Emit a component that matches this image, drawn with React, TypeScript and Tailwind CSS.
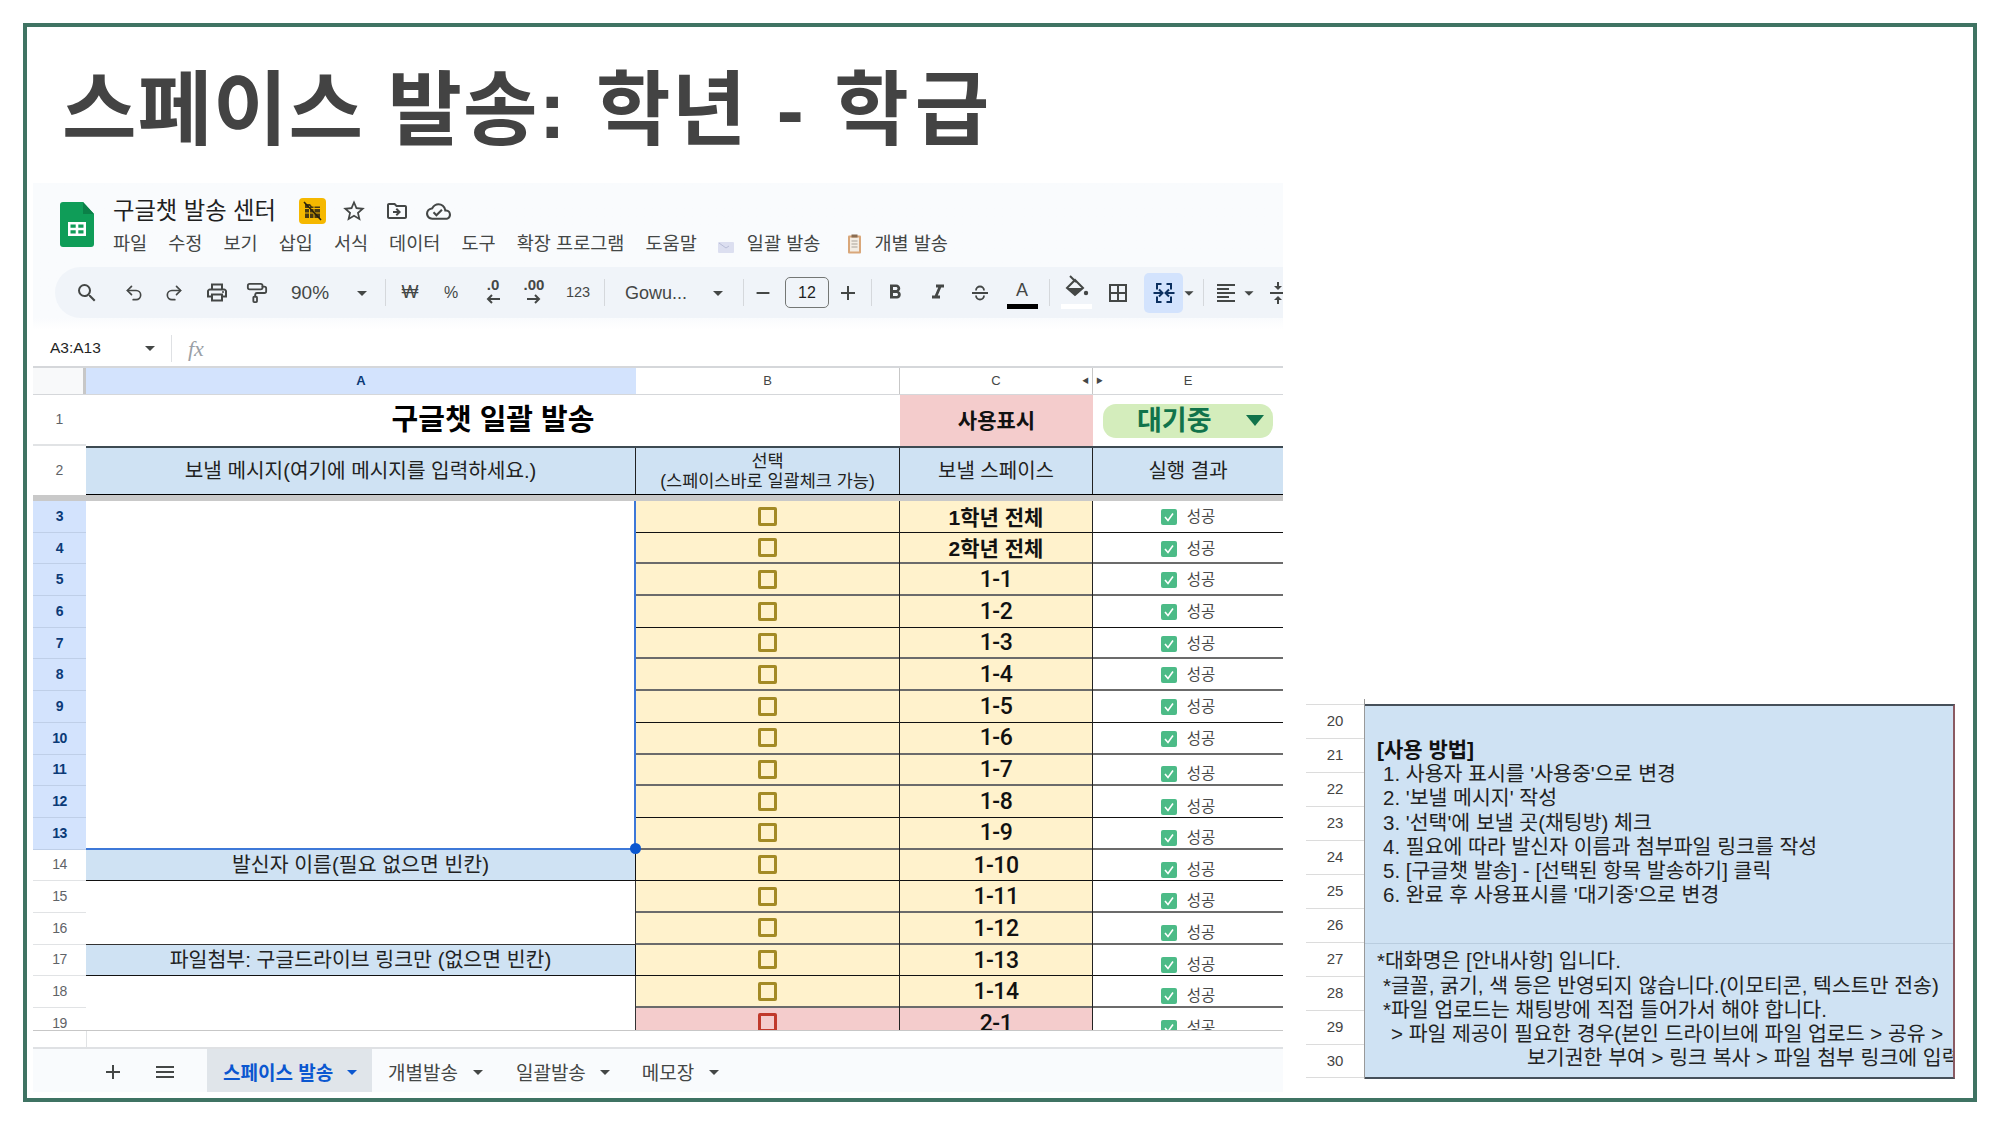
import React from 'react';
import { PaintRoller, Redo2, Undo2 } from 'lucide-react';
import {
    MdAdd, MdArrowDropDown, MdBorderAll, MdFormatAlignLeft, MdFormatBold, MdFormatItalic, MdMenu,
    MdOutlineCloudDone, MdOutlineDriveFileMove, MdOutlinePrint, MdRemove, MdSearch, MdStarBorder, MdVerticalAlignCenter,
} from 'react-icons/md';

const ROWS = [3, 4, 5, 6, 7, 8, 9, 10, 11, 12, 13, 14, 15, 16, 17, 18, 19];
const NAMES = ['1학년 전체', '2학년 전체', '1-1', '1-2', '1-3', '1-4', '1-5', '1-6', '1-7', '1-8', '1-9', '1-10', '1-11', '1-12', '1-13', '1-14', '2-1'];
const DARK_LINES = [3, 6, 9, 12, 14, 17];

const rowLine = (row: number) => (DARK_LINES.includes(row) ? 'border-b border-[#111]' : 'border-b-2 border-[#6b6b6b]');

const SheetsLogo = () => (
    <svg width="34" height="45" viewBox="0 0 34 45">
        <path d="M3 0h20l11 12v30a3 3 0 0 1-3 3H3a3 3 0 0 1-3-3V3a3 3 0 0 1 3-3z" fill="#0f9d58" />
        <path d="M23 0l11 12H23z" fill="#0b8048" />
        <path d="M8 20h18v14H8zM10.5 22.5v3.2h5.2v-3.2zM18.3 22.5v3.2h5.2v-3.2zM10.5 28.3v3.2h5.2v-3.2zM18.3 28.3v3.2h5.2v-3.2z" fill="#fff" fillRule="evenodd" />
    </svg>
);

const LockedBadge = () => (
    <svg width="27" height="26" viewBox="0 0 27 26">
        <rect width="27" height="26" rx="4" fill="#f5b800" />
        <path d="M6 6h5l2 2.5h8V20H6z" fill="#4a3a12" />
        <path d="M6 10.5h15M6 15h15M10.5 8v12M15 8v12" stroke="#f5b800" strokeWidth="1" />
        <path d="M5 4l17 18" stroke="#2b2208" strokeWidth="1.6" />
    </svg>
);

const MergeIcon = () => (
    <svg width="24" height="24" viewBox="0 0 24 24" fill="none" stroke="#0b2f5f" strokeWidth="2">
        <path d="M9.5 3H5v5.5M5 15.5V21h4.5M14.5 3H19v5.5M19 15.5V21h-4.5" />
        <path d="M1.5 12h8.5M7 8.5l3.5 3.5L7 15.5M22.5 12H14M17 8.5L13.5 12l3.5 3.5" />
    </svg>
);

const StrikeIcon = () => (
    <svg width="24" height="24" viewBox="0 0 24 24" fill="none" stroke="#444746" strokeWidth="1.8">
        <path d="M4 12h16M8 9.5a4 4 0 0 1 8 0M8 14.5a4 4 0 0 0 8 0" />
    </svg>
);

const FillIcon = () => (
    <svg width="26" height="24" viewBox="0 0 26 24" fill="none">
        <path d="M7 1l6 6" stroke="#444746" strokeWidth="2" />
        <path d="M4 13l8-8 8 8-8 7z" stroke="#444746" strokeWidth="2" />
        <path d="M4 13h16l-8 7z" fill="#444746" />
        <circle cx="23" cy="18" r="2.2" fill="#444746" />
    </svg>
);

const ArrowIcon = ({ flip = false }: { flip?: boolean }) => (
    <svg width="14" height="10" viewBox="0 0 14 10" fill="none" stroke="#444746" strokeWidth="2" className={flip ? '-scale-x-100' : ''}>
        <path d="M14 5H2M6 1L2 5l4 4" />
    </svg>
);

const MailIcon = () => (
    <svg width="16" height="14" viewBox="0 0 16 14">
        <rect y="2" width="16" height="11" rx="1" fill="#dcdff0" />
        <path d="M1 3l7 5 3-2" stroke="#b9bed8" fill="none" />
    </svg>
);

const ClipboardIcon = () => (
    <svg width="15" height="20" viewBox="0 0 15 20">
        <rect x="1" y="1.5" width="13" height="18" rx="1" fill="#d9a77a" />
        <rect x="3" y="3.5" width="9" height="14" fill="#f3ede4" />
        <path d="M4.5 7h6M4.5 10h6M4.5 13h6" stroke="#a9a39a" />
        <rect x="4.5" y="0.5" width="6" height="3" fill="#8a6d52" />
    </svg>
);

const Sep = ({ className }: { className: string }) => <div className={`w-px h-[27px] bg-[#d5d8dc] shrink-0 ${className}`} />;

const Drop = ({ className = '' }: { className?: string }) => (
    <div className={`w-4 flex items-center justify-center shrink-0 text-[#444746] ${className}`}>
        <MdArrowDropDown size={24} className="shrink-0" />
    </div>
);

const Tool = ({ className = '', children }: { className?: string; children: React.ReactNode }) => (
    <div className={`w-6 h-6 flex items-center justify-center shrink-0 text-[#444746] ${className}`}>{children}</div>
);

const Toolbar = () => (
    <div className="ml-[22px] h-[51px] rounded-l-[26px] bg-[#f0f4f9] flex items-center pl-[20px] overflow-hidden">
        <Tool><MdSearch size={26} /></Tool>
        <Tool className="ml-[23px]"><Undo2 size={20} strokeWidth={2} /></Tool>
        <Tool className="ml-[16px]"><Redo2 size={20} strokeWidth={2} /></Tool>
        <Tool className="ml-[19px]"><MdOutlinePrint size={25} /></Tool>
        <Tool className="ml-[16px]"><PaintRoller size={22} strokeWidth={2} /></Tool>
        <span className="ml-[22px] w-[38px] text-[19px] leading-6 text-[#444746] shrink-0">90%</span>
        <Drop className="ml-[25px]" />
        <Sep className="ml-[15px]" />
        <Tool className="ml-[12px] text-[18px]">₩</Tool>
        <Tool className="ml-[17px] text-[16px]">%</Tool>
        <div className="ml-[18px] w-6 h-[34px] flex flex-col items-center shrink-0 text-[#444746]">
            <span className="text-[15px] leading-[18px] font-bold">.0</span>
            <ArrowIcon />
        </div>
        <div className="ml-[17px] w-6 h-[34px] flex flex-col items-center shrink-0 text-[#444746]">
            <span className="text-[15px] leading-[18px] font-bold">.00</span>
            <ArrowIcon flip />
        </div>
        <Tool className="ml-[20px] text-[14.5px]">123</Tool>
        <Sep className="ml-[14px]" />
        <span className="ml-[20px] w-[63px] text-[18px] leading-6 text-[#444746] shrink-0">Gowu...</span>
        <Drop className="ml-[22px]" />
        <Sep className="ml-[17px]" />
        <div className="ml-[9px] w-5 flex justify-center shrink-0 text-[#444746]"><MdRemove size={22} className="shrink-0" /></div>
        <div className="ml-[12px] w-[44px] h-[31px] rounded-[5px] border border-[#747775] flex items-center justify-center text-[16px] text-[#1f1f1f] shrink-0">12</div>
        <div className="ml-[9px] w-5 flex justify-center shrink-0 text-[#444746]"><MdAdd size={24} className="shrink-0" /></div>
        <Sep className="ml-[13px]" />
        <Tool className="ml-[11px]"><MdFormatBold size={27} /></Tool>
        <Tool className="ml-[19px]"><MdFormatItalic size={27} /></Tool>
        <Tool className="ml-[18px]"><StrikeIcon /></Tool>
        <div className="ml-[18px] w-6 h-[34px] flex flex-col items-center shrink-0">
            <span className="text-[18px] leading-[24px] text-[#444746] mt-[2px]">A</span>
            <div className="w-[31px] h-[5px] bg-black shrink-0 mt-[2px]" />
        </div>
        <Sep className="ml-[15px]" />
        <div className="ml-[14px] w-6 h-[36px] flex flex-col items-center shrink-0">
            <FillIcon />
            <div className="w-[31px] h-[5px] bg-white shrink-0 mt-[5px]" />
        </div>
        <Tool className="ml-[18px]"><MdBorderAll size={24} /></Tool>
        <div className="ml-[14px] w-[39px] h-[40px] rounded-[5px] bg-[#d3e3fd] flex items-center justify-center shrink-0"><MergeIcon /></div>
        <div className="w-3 flex justify-center shrink-0 text-[#444746]"><MdArrowDropDown size={22} className="shrink-0" /></div>
        <Sep className="ml-[8px]" />
        <Tool className="ml-[10px]"><MdFormatAlignLeft size={26} /></Tool>
        <div className="ml-[5px] w-3 flex justify-center shrink-0 text-[#444746]"><MdArrowDropDown size={22} className="shrink-0" /></div>
        <Tool className="ml-[11px]"><MdVerticalAlignCenter size={24} /></Tool>
    </div>
);

const Chrome = () => (
    <div className="h-[147px] bg-gradient-to-b from-[#f9fbfd] from-[135px] to-white shrink-0">
        <div className="h-[84px] flex pl-[27px]">
            <div className="pt-[19px] shrink-0"><SheetsLogo /></div>
            <div className="ml-[19px] min-w-0">
                <div className="h-[42px] pt-[14px] flex items-center">
                    <span className="text-[23.3px] leading-[30px] text-[#1f1f1f]">구글챗 발송 센터</span>
                    <span className="ml-[23px]"><LockedBadge /></span>
                    <MdStarBorder size={26} className="ml-[15px] text-[#444746]" />
                    <MdOutlineDriveFileMove size={24} className="ml-[18px] text-[#444746]" />
                    <MdOutlineCloudDone size={25} className="ml-[17px] text-[#444746]" />
                </div>
                <div className="flex items-center h-[30px] mt-[4px] text-[18.6px] leading-[26px] text-[#444746] whitespace-nowrap">
                    <span>파일</span>
                    <span className="ml-[21px]">수정</span>
                    <span className="ml-[21px]">보기</span>
                    <span className="ml-[21px]">삽입</span>
                    <span className="ml-[21px]">서식</span>
                    <span className="ml-[21px]">데이터</span>
                    <span className="ml-[21px]">도구</span>
                    <span className="ml-[21px]">확장 프로그램</span>
                    <span className="ml-[21px]">도움말</span>
                    <span className="ml-[21px] pt-[5px]"><MailIcon /></span>
                    <span className="ml-[13px]">일괄 발송</span>
                    <span className="ml-[27px]"><ClipboardIcon /></span>
                    <span className="ml-[12px]">개별 발송</span>
                </div>
            </div>
        </div>
        <Toolbar />
    </div>
);

const FormulaBar = () => (
    <div className="h-[36px] flex items-center pl-[17px] bg-white">
        <span className="w-[50px] text-[15.5px] leading-5 text-[#1f1f1f] whitespace-nowrap">A3:A13</span>
        <MdArrowDropDown size={24} className="ml-[38px] text-[#444746]" />
        <div className="ml-[9px] w-px h-[27px] bg-[#dfe1e4]" />
        <span className="ml-[16px] text-[22px] italic text-[#9aa0a6] font-['Liberation_Serif',serif]">fx</span>
    </div>
);

const ColumnHeaders = () => (
    <div className="h-[29px] flex border-t-2 border-b border-[#d5d7da] text-[13px] leading-[26px] text-center text-[#444746]">
        <div className="w-[53px] bg-[#f8f9fa] border-r-[3px] border-[#c7c7c7]" />
        <div className="w-[550px] bg-[#d3e3fd] font-bold text-[#0b3a77]">A</div>
        <div className="w-[264px] border-r border-[#c7c7c7]">B</div>
        <div className="relative w-[193px] border-r border-[#c7c7c7]">
            C
            <span className="absolute right-[3px] top-0 text-[7px]">◀</span>
        </div>
        <div className="relative flex-1">
            E
            <span className="absolute left-[3px] top-0 text-[7px]">▶</span>
        </div>
    </div>
);

const TitleRows = () => (
    <>
        <div className="h-[51px] flex">
            <div className="w-[53px] flex items-center justify-center text-[14px] text-[#5f6368] border-b-2 border-[#e1e3e5]">1</div>
            <div className="w-[814px] flex items-center justify-center text-[29px] font-bold text-black">구글챗 일괄 발송</div>
            <div className="w-[193px] bg-[#f4cccc] flex items-center justify-center text-[21px] font-bold text-[#111]">사용표시</div>
            <div className="flex-1 flex items-center pl-[10px]">
                <div className="w-[170px] h-[34px] rounded-[13px] bg-[#d4edbc] flex items-center pl-[34px] text-[27px] leading-[34px] font-bold text-[#11734b]">
                    대기중
                    <div className="ml-[34px] w-0 h-0 border-x-[9px] border-x-transparent border-t-[11px] border-t-[#11734b]" />
                </div>
            </div>
        </div>
        <div className="h-[49px] flex">
            <div className="w-[53px] flex items-center justify-center text-[14px] text-[#5f6368]">2</div>
            <div className="flex-1 flex bg-[#cfe2f3] border-t-2 border-t-[#3d4a52] border-b border-b-black text-[#222]">
                <div className="w-[550px] flex items-center justify-center text-[20.2px] border-r border-[#222]">보낼 메시지(여기에 메시지를 입력하세요.)</div>
                <div className="w-[264px] flex flex-col items-center justify-center text-[17.5px] leading-[20px] border-r border-[#222]">
                    <span>선택</span>
                    <span>(스페이스바로 일괄체크 가능)</span>
                </div>
                <div className="w-[193px] flex items-center justify-center text-[20px] border-r border-[#222]">보낼 스페이스</div>
                <div className="flex-1 flex items-center justify-center text-[20px]">실행 결과</div>
            </div>
        </div>
        <div className="h-[6px] bg-[#c9c9c9]" />
    </>
);

const CheckCell = ({ row }: { row: number }) => (
    <div className={`h-[31.7px] flex items-center justify-center ${rowLine(row)} ${row === 19 ? 'bg-[#f4cccc]' : 'bg-[#fff2cc]'}`}>
        <div className={`w-[19px] h-[19px] rounded-[2px] border-[3px] ${row === 19 ? 'border-[#c0392b]' : 'border-[#a38a25]'}`} />
    </div>
);

const ResultCell = ({ row }: { row: number }) => (
    <div className={`h-[31.7px] flex items-center justify-center gap-[10px] ${rowLine(row)} ${row >= 11 ? 'pt-[10px]' : 'pt-[2px]'}`}>
        <div className="w-4 h-4 rounded-[2px] bg-[#4cbb87] flex items-center justify-center">
            <svg width="12" height="12" viewBox="0 0 12 12" fill="none" stroke="#fff" strokeWidth="1.6"><path d="M2 6l3 3.5L10 2.5" /></svg>
        </div>
        <span className="text-[15.5px] leading-5 text-[#4a4a4a]">성공</span>
    </div>
);

const Grid = () => (
    <div className="h-[530px] flex overflow-hidden border-b border-[#c7c7c7]">
        <div className="w-[53px]">
            {ROWS.map((row) => (
                <div
                    key={row}
                    className={`h-[31.7px] flex items-center justify-center text-[14px] tracking-[-0.5px] border-b ${
                        row <= 13 ? 'bg-[#d3e3fd] font-bold text-[#0b3a77] border-[#bfcfe8]' : 'text-[#5f6368] border-[#e1e3e5]'
                    }`}
                >
                    {row}
                </div>
            ))}
        </div>
        <div className="relative w-[550px] text-[20.5px] text-[#222]">
            <div className="h-[348.7px] border-r-2 border-b-2 border-[#3d78d8]" />
            <div className="h-[31.7px] flex items-center justify-center bg-[#cfe2f3] border-r border-b border-[#111]">발신자 이름(필요 없으면 빈칸)</div>
            <div className="h-[63.4px] border-r border-b border-[#333]" />
            <div className="h-[31.7px] flex items-center justify-center bg-[#cfe2f3] border-r border-b border-[#111]">파일첨부: 구글드라이브 링크만 (없으면 빈칸)</div>
            <div className="h-[63.4px] border-r border-[#333]" />
            {/* selection handle */}
            <div className="absolute right-[-5px] top-[342px] z-10 w-[11px] h-[11px] rounded-full bg-[#0b57d0]" />
        </div>
        <div className="w-[264px] border-r border-[#222]">
            {ROWS.map((row) => <CheckCell key={row} row={row} />)}
        </div>
        <div className="w-[193px] border-r border-[#222] text-[#111]">
            {NAMES.map((name, i) => (
                <div
                    key={name}
                    className={`h-[31.7px] flex items-center justify-center pt-[2px] ${i < 2 ? 'text-[21px] font-bold' : "font-['Roboto',sans-serif] font-medium text-[23px] tracking-[-0.5px]"} ${rowLine(ROWS[i])} ${ROWS[i] === 19 ? 'bg-[#f4cccc]' : 'bg-[#fff2cc]'}`}
                >
                    {name}
                </div>
            ))}
        </div>
        <div className="flex-1">
            {ROWS.map((row) => <ResultCell key={row} row={row} />)}
        </div>
    </div>
);

const TabBar = () => (
    <div className="h-[45px] flex items-center pl-[68px] pt-[2px] bg-[#f9fbfd] border-t-2 border-[#dfe1e4] text-[19px] leading-[26px] text-[#444746]">
        <MdAdd size={24} />
        <MdMenu size={24} className="ml-[28px]" />
        <div className="ml-[30px] -mt-[2px] w-[165px] h-[43px] bg-[#e0e5ea] flex items-center pl-[16px] font-bold text-[#0b57d0]">
            <span className="pt-[7px]">스페이스 발송</span>
            <MdArrowDropDown size={24} className="ml-[7px] mt-[2px]" />
        </div>
        <span className="ml-[16px] pt-[5px]">개별발송</span>
        <MdArrowDropDown size={24} className="ml-[8px]" />
        <span className="ml-[26px] pt-[5px]">일괄발송</span>
        <MdArrowDropDown size={24} className="ml-[7px]" />
        <span className="ml-[25px] pt-[5px]">메모장</span>
        <MdArrowDropDown size={24} className="ml-[8px]" />
    </div>
);

const GUIDE_TOP = ['1. 사용자 표시를 \'사용중\'으로 변경', '2. \'보낼 메시지\' 작성', '3. \'선택\'에 보낼 곳(채팅방) 체크', '4. 필요에 따라 발신자 이름과 첨부파일 링크를 작성', '5. [구글챗 발송] - [선택된 항목 발송하기] 클릭', '6. 완료 후 사용표시를 \'대기중\'으로 변경'];

const Guide = () => (
    <div className="ml-[23px] mb-[13px] w-[649px] h-[380px] flex shrink-0">
        <div className="w-[58px] pt-[5px] shrink-0">
            {[20, 21, 22, 23, 24, 25, 26, 27, 28, 29, 30].map((n) => (
                <div key={n} className="h-[34px] flex items-center justify-center border-t border-[#dcdcdc] last:border-b text-[15px] text-[#444]">{n}</div>
            ))}
        </div>
        <div className="flex-1 min-w-0 pt-[5px] border-l border-[#999]">
            <div className="relative h-[375px] bg-[#cfe2f3] border-t-2 border-b-2 border-[#46505a] border-r-2 border-r-[#8a5a62] overflow-hidden text-[20.5px] leading-[24.2px] text-[#222] whitespace-nowrap pl-[12px] pt-[32px]">
                <div className="font-bold text-[21px] text-[#111]">[사용 방법]</div>
                <div className="pl-[6px]">
                    {GUIDE_TOP.map((line) => <div key={line}>{line}</div>)}
                </div>
                <div className="mt-[42px]">*대화명은 [안내사항] 입니다.</div>
                <div className="pl-[6px]">
                    <div>*글꼴, 굵기, 색 등은 반영되지 않습니다.(이모티콘, 텍스트만 전송)</div>
                    <div>*파일 업로드는 채팅방에 직접 들어가서 해야 합니다.</div>
                    <div className="pl-[8px]">&gt; 파일 제공이 필요한 경우(본인 드라이브에 파일 업로드 &gt; 공유 &gt;</div>
                    <div className="pl-[144px]">보기권한 부여 &gt; 링크 복사 &gt; 파일 첨부 링크에 입력</div>
                </div>
                <div className="absolute left-0 right-0 top-[237px] h-px bg-[#b9cddf]" />
            </div>
        </div>
    </div>
);

export default function App() {
    return (
        <div className="w-[2000px] h-[1125px] bg-white pt-[23px] pl-[23px] font-['Liberation_Sans','Noto_Sans_CJK_KR',sans-serif]">
            <div className="w-[1954px] h-[1079px] border-4 border-[#3f7363] flex flex-col">
                <h1 className="h-[156px] shrink-0 pl-[35px] pt-[33px] text-[81px] leading-[100px] tracking-[1px] [word-spacing:6px] font-bold text-[#434343] whitespace-nowrap">
                    <span className="[word-spacing:0px]">스페이스 </span>발송: 학년 - <span className="tracking-[6px]">학급</span>
                </h1>
                <div className="flex-1 flex items-end pl-[6px] pb-[6px] min-h-0">
                    <div className="w-[1250px] h-[909px] flex flex-col shrink-0 overflow-hidden">
                        <Chrome />
                        <FormulaBar />
                        <ColumnHeaders />
                        <TitleRows />
                        <Grid />
                        <div className="h-[16px] shrink-0 pl-[53px]"><div className="h-full border-l border-[#e1e3e5]" /></div>
                        <TabBar />
                    </div>
                    <Guide />
                </div>
            </div>
        </div>
    );
}
